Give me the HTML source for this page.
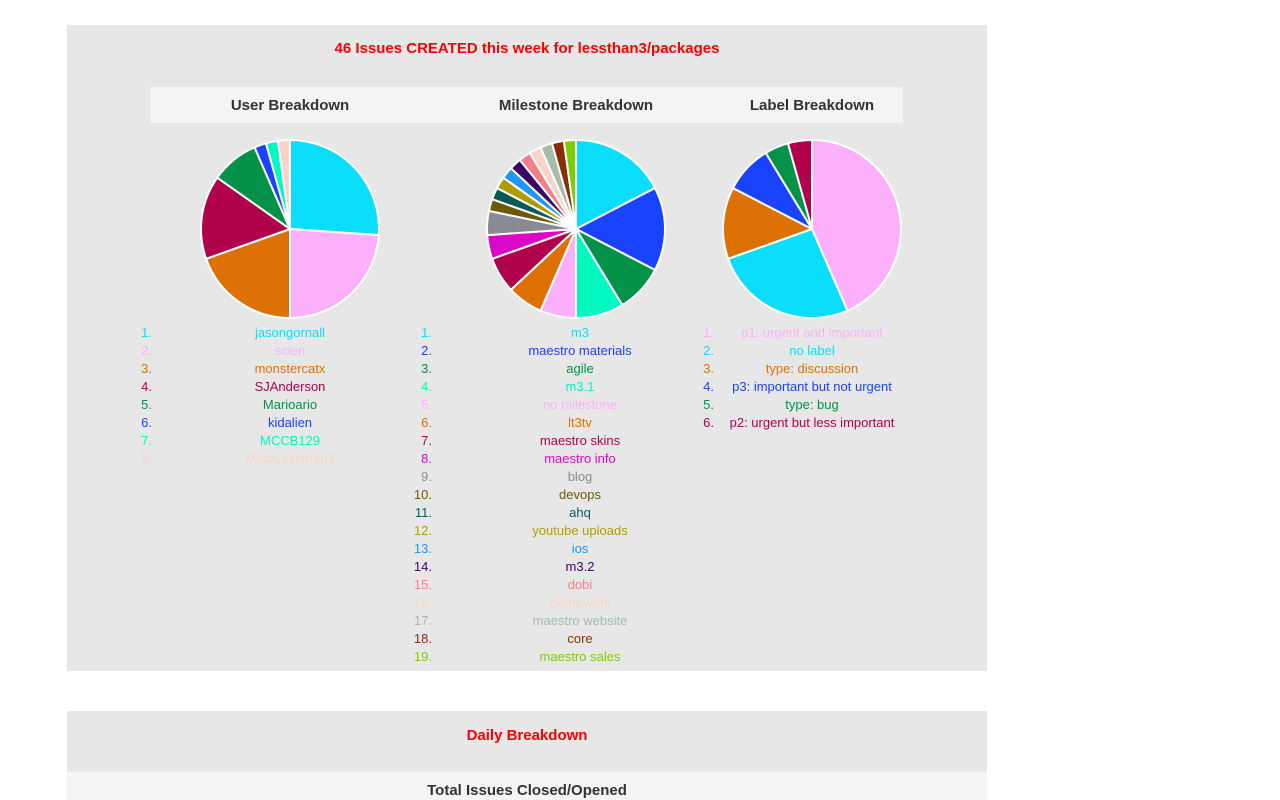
<!DOCTYPE html>
<html><head><meta charset="utf-8"><style>
body{margin:0;background:#fff;font-family:"Liberation Sans",Arial,sans-serif;width:1280px;height:800px;overflow:hidden;position:relative}
.box{position:absolute;left:67px;width:920px;background:#e7e7e7}
.title{position:absolute;left:0;width:920px;text-align:center;color:#f00;font-weight:bold;font-size:15px}
.strip{position:absolute;background:#f4f4f4}
.h{position:absolute;font-weight:bold;font-size:15px;color:#333;text-align:center;width:300px}
.row{position:absolute;font-size:13px;height:18px;line-height:18px}
.num{position:absolute;text-align:right;width:40px}
.lab{position:absolute;text-align:center;width:300px;white-space:nowrap}
svg{position:absolute}
</style></head><body>
<div class="box" style="top:25px;height:646px">
<div class="title" style="top:15px">46 Issues CREATED this week for lessthan3/packages</div>
</div>
<div class="strip" style="left:150px;top:87px;width:753px;height:36px"></div>
<div class="h" style="left:140px;top:97px">User Breakdown</div>
<div class="h" style="left:426px;top:97px">Milestone Breakdown</div>
<div class="h" style="left:662px;top:97px">Label Breakdown</div>
<div id="lists"></div>
<svg id="pies" width="1280" height="800" style="left:0;top:0"></svg>
<div class="box" style="top:711px;height:89px">
<div class="title" style="top:16px">Daily Breakdown</div>
</div>
<div class="strip" style="left:67px;top:772px;width:920px;height:28px"></div>
<div class="h" style="left:377px;top:782px">Total Issues Closed/Opened</div>
<script>
var C={cy:"#0bdefa",pk:"#fcb0fb",or:"#dd7106",mr:"#b0034b",gr:"#039247",bl:"#1a43ff",mt:"#00f9be",pe:"#f9d3c7",mg:"#dc08c8",gy:"#8a8a94",ol:"#6a5a06",tl:"#0b5a58",mu:"#b09c04",sk:"#1e98f4",pu:"#3d0466",sa:"#f2808a",gg:"#a8bba8",br:"#882e04",li:"#7ccd04"};
var pies=[
 {cx:290,cy:229,nx:112,lx:140,d:[["jasongornall",12,"cy"],["scien",11,"pk"],["monstercatx",9,"or"],["SJAnderson",7,"mr"],["Marioario",4,"gr"],["kidalien",1,"bl"],["MCCB129",1,"mt"],["MotoLessthan3",1,"pe"]]},
 {cx:576,cy:229,nx:392,lx:430,d:[["m3",8,"cy"],["maestro materials",7,"bl"],["agile",4,"gr"],["m3.1",4,"mt"],["no milestone",3,"pk"],["lt3tv",3,"or"],["maestro skins",3,"mr"],["maestro info",2,"mg"],["blog",2,"gy"],["devops",1,"ol"],["ahq",1,"tl"],["youtube uploads",1,"mu"],["ios",1,"sk"],["m3.2",1,"pu"],["dobi",1,"sa"],["client work",1,"pe"],["maestro website",1,"gg"],["core",1,"br"],["maestro sales",1,"li"]]},
 {cx:812,cy:229,nx:674,lx:662,d:[["p1: urgent and important",20,"pk"],["no label",12,"cy"],["type: discussion",6,"or"],["p3: important but not urgent",4,"bl"],["type: bug",2,"gr"],["p2: urgent but less important",2,"mr"]]}
];
var svg="",html="",r=89;
pies.forEach(function(p){
 var tot=0;p.d.forEach(function(e){tot+=e[1]});
 var a=0;
 p.d.forEach(function(e,i){
  var a2=a+e[1]/tot*2*Math.PI;
  var x1=p.cx+r*Math.sin(a),y1=p.cy-r*Math.cos(a),x2=p.cx+r*Math.sin(a2),y2=p.cy-r*Math.cos(a2);
  svg+='<path d="M'+p.cx+','+p.cy+'L'+x1+','+y1+'A'+r+','+r+' 0 '+(a2-a>Math.PI?1:0)+' 1 '+x2+','+y2+'Z" fill="'+C[e[2]]+'" stroke="#fff" stroke-width="2" stroke-linejoin="round"/>';
  a=a2;
  var t=324+i*18;
  html+='<div class="row" style="top:'+t+'px;left:0;color:'+C[e[2]]+'"><span class="num" style="left:'+p.nx+'px">'+(i+1)+'.</span><span class="lab" style="left:'+p.lx+'px">'+e[0]+'</span></div>';
 });
});
document.getElementById("pies").innerHTML=svg;
document.getElementById("lists").innerHTML=html;
</script>
</body></html>
